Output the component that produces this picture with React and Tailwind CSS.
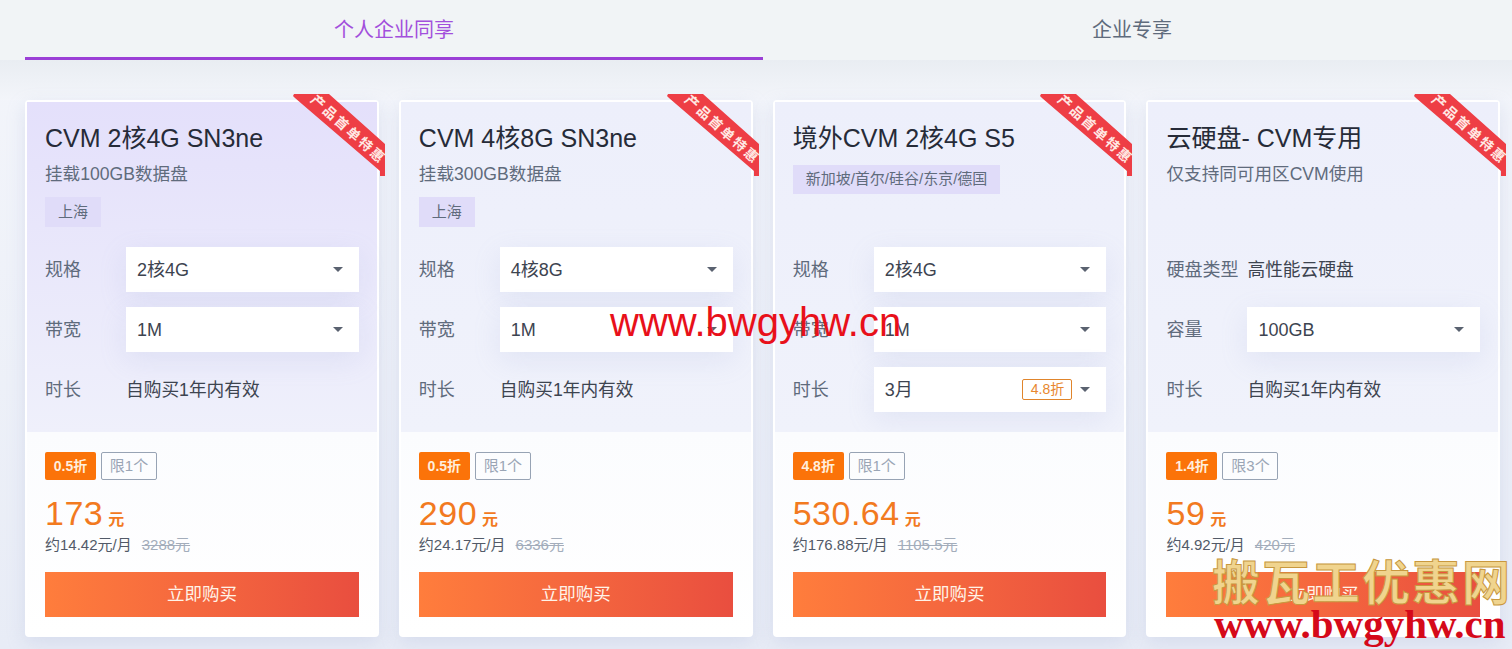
const font = { fontFamily: '"Liberation Sans", "Noto Sans CJK SC", sans-serif' };

function Caret() {
  return <span className="w-0 h-0 border-x-[5px] border-x-transparent border-t-[5px] border-t-[#5a6270] shrink-0" />;
}

function Select({ value, badge }) {
  return (
    <div className="flex-1 h-[45px] bg-white flex items-center justify-between pl-[11px] pr-[16px] text-[18px] text-[#3d4450] shadow-[0_8px_28px_rgba(150,160,210,0.16)]">
      <span className="pt-[2px]">{value}</span>
      <span className="flex items-center gap-[8px]">
        {badge && (
          <span className="h-[21px] w-[50px] flex items-center justify-center border border-[#e0852c] rounded-[2px] text-[14px] text-[#e8872e]">
            {badge}
          </span>
        )}
        <Caret />
      </span>
    </div>
  );
}

function Row({ label, value, select, badge }) {
  return (
    <div className="flex items-center h-[45px]">
      <span className="w-[81px] shrink-0 pt-[2px] text-[18px] whitespace-nowrap text-[#5f6b7c]">{label}</span>
      {select ? (
        <Select value={value} badge={badge} />
      ) : (
        <span className="pt-[2px] text-[17.7px] text-[#3d4450] whitespace-nowrap">{value}</span>
      )}
    </div>
  );
}

function Ribbon() {
  return (
    <div className="absolute top-[-8px] right-[-10px] w-[94px] h-[84px] pointer-events-none">
      <svg width="94" height="84" viewBox="0 0 94 84" className="absolute inset-0">
        <polygon points="0,2 1,0 36,0 92,50 92,82 87,82 87,77 2,4" fill="#ee3e45" />
      </svg>
      <span className="absolute left-[7px] top-[28px] w-[96px] text-center text-[13.5px] leading-[16px] tracking-[2.4px] font-bold text-[#ffe9e4] whitespace-nowrap rotate-[42deg]">
        产品首单特惠
      </span>
    </div>
  );
}

function Card({ c }) {
  return (
    <div className="relative w-[353.83px] shrink-0 h-[537px] bg-white rounded-[4px] border-2 border-white shadow-[0_6px_18px_rgba(170,180,215,0.28)] flex flex-col">
      <Ribbon />
      <div className={`h-[330px] shrink-0 px-[18px] ${c.first ? "bg-gradient-to-b from-[#e4e0fb] to-[#eff0fb]" : "bg-gradient-to-b from-[#edeffb] to-[#f0f2fb]"}`}>
        <div className="h-[145px] pt-[20px]">
          <div className="text-[25px] leading-[32px] text-[#262b38] whitespace-nowrap">{c.title}</div>
          {c.sub && <div className="text-[17.6px] leading-[24px] mt-[8px] text-[#5f6b7c]">{c.sub}</div>}
          {c.tag && (
            <div className={`flex w-fit items-center justify-center px-[13px] mt-[11px] bg-[#e0dcf9] text-[15px] text-[#5f6b7c] ${c.sub ? "h-[30px]" : "h-[29px]"}`}>
              {c.tag}
            </div>
          )}
        </div>
        <div className="flex flex-col gap-[15px]">
          {c.rows.map((r) => (
            <Row key={r.label} {...r} />
          ))}
        </div>
      </div>
      <div className="flex-1 bg-gradient-to-b from-[#fbfcfe] to-white px-[18px] pt-[20px]">
        <div className="flex gap-[5px]">
          <span className="h-[28px] w-[51px] flex items-center justify-center bg-[#fb7309] rounded-[2px] text-[14px] font-bold text-[#ffeedd]">
            {c.discount}
          </span>
          <span className="h-[28px] w-[56px] flex items-center justify-center border border-[#97a3b4] rounded-[2px] text-[15px] text-[#9aa5b5]">
            {c.limit}
          </span>
        </div>
        <div className="flex items-baseline mt-[12px] h-[42px] text-[#f27a1f]">
          <span className="text-[34px] leading-[42px] tracking-[0.5px]">{c.price}</span>
          <span className="ml-[5px] text-[16px] font-bold">元</span>
        </div>
        <div className="flex items-center h-[23px] text-[15px] text-[#525a68]">
          <span>{c.month}</span>
          <span className="ml-[10px] text-[#a3adbb] line-through">{c.orig}</span>
        </div>
        <div className="mt-[15px] h-[45px] bg-gradient-to-r from-[#ff7d3c] to-[#e94e3f] flex items-center justify-center text-[17.5px] text-[#fff3e8]">
          立即购买
        </div>
      </div>
    </div>
  );
}

const cards = [
  {
    first: true, title: "CVM 2核4G SN3ne", sub: "挂载100GB数据盘", tag: "上海",
    rows: [
      { label: "规格", value: "2核4G", select: true },
      { label: "带宽", value: "1M", select: true },
      { label: "时长", value: "自购买1年内有效" },
    ],
    discount: "0.5折", limit: "限1个", price: "173", month: "约14.42元/月", orig: "3288元",
  },
  {
    title: "CVM 4核8G SN3ne", sub: "挂载300GB数据盘", tag: "上海",
    rows: [
      { label: "规格", value: "4核8G", select: true },
      { label: "带宽", value: "1M", select: true },
      { label: "时长", value: "自购买1年内有效" },
    ],
    discount: "0.5折", limit: "限1个", price: "290", month: "约24.17元/月", orig: "6336元",
  },
  {
    title: "境外CVM 2核4G S5", sub: "", tag: "新加坡/首尔/硅谷/东京/德国",
    rows: [
      { label: "规格", value: "2核4G", select: true },
      { label: "带宽", value: "1M", select: true },
      { label: "时长", value: "3月", select: true, badge: "4.8折" },
    ],
    discount: "4.8折", limit: "限1个", price: "530.64", month: "约176.88元/月", orig: "1105.5元",
  },
  {
    title: "云硬盘- CVM专用", sub: "仅支持同可用区CVM使用",
    rows: [
      { label: "硬盘类型", value: "高性能云硬盘" },
      { label: "容量", value: "100GB", select: true },
      { label: "时长", value: "自购买1年内有效" },
    ],
    discount: "1.4折", limit: "限3个", price: "59", month: "约4.92元/月", orig: "420元",
  },
];

export default function App() {
  return (
    <div style={font} className="relative w-[1512px] h-[649px] overflow-hidden bg-gradient-to-b from-[#f4f6fb] to-[#e8ecf6]">
      <div className="flex h-[60px] pl-[25px] bg-[#f1f4f6]">
        <div className="w-[738px] h-[60px] flex items-center justify-center border-b-[3px] border-[#9b3fd6] text-[20px] text-[#a24fdc] pt-[2px]">
          个人企业同享
        </div>
        <div className="w-[738px] h-[60px] flex items-center justify-center text-[20px] text-[#5f6b7c]">
          企业专享
        </div>
      </div>
      <div className="h-[40px] bg-gradient-to-b from-[#e9edf2] to-[#f3f5fa]" />
      <div className="flex gap-[20px] pl-[25px]">
        {cards.map((c) => (
          <Card key={c.title} c={c} />
        ))}
      </div>
      <div className="absolute left-[610px] top-[299px] text-[40px] leading-[46px] text-[#e8101a] whitespace-nowrap">
        www.bwgyhw.cn
      </div>
      <div
        style={{ fontFamily: '"Noto Sans CJK SC", sans-serif', WebkitTextStroke: "1px #c8983f" }}
        className="absolute left-[1212px] top-[553px] text-[48px] leading-[52px] tracking-[2px] text-[#f0d48e] font-bold whitespace-nowrap"
      >
        搬瓦工优惠网
      </div>
      <div
        style={{ fontFamily: '"Liberation Serif", serif' }}
        className="absolute left-[1214px] top-[603px] text-[41px] leading-[42px] font-bold text-[#d5091a] whitespace-nowrap"
      >
        www.bwgyhw.cn
      </div>
    </div>
  );
}
